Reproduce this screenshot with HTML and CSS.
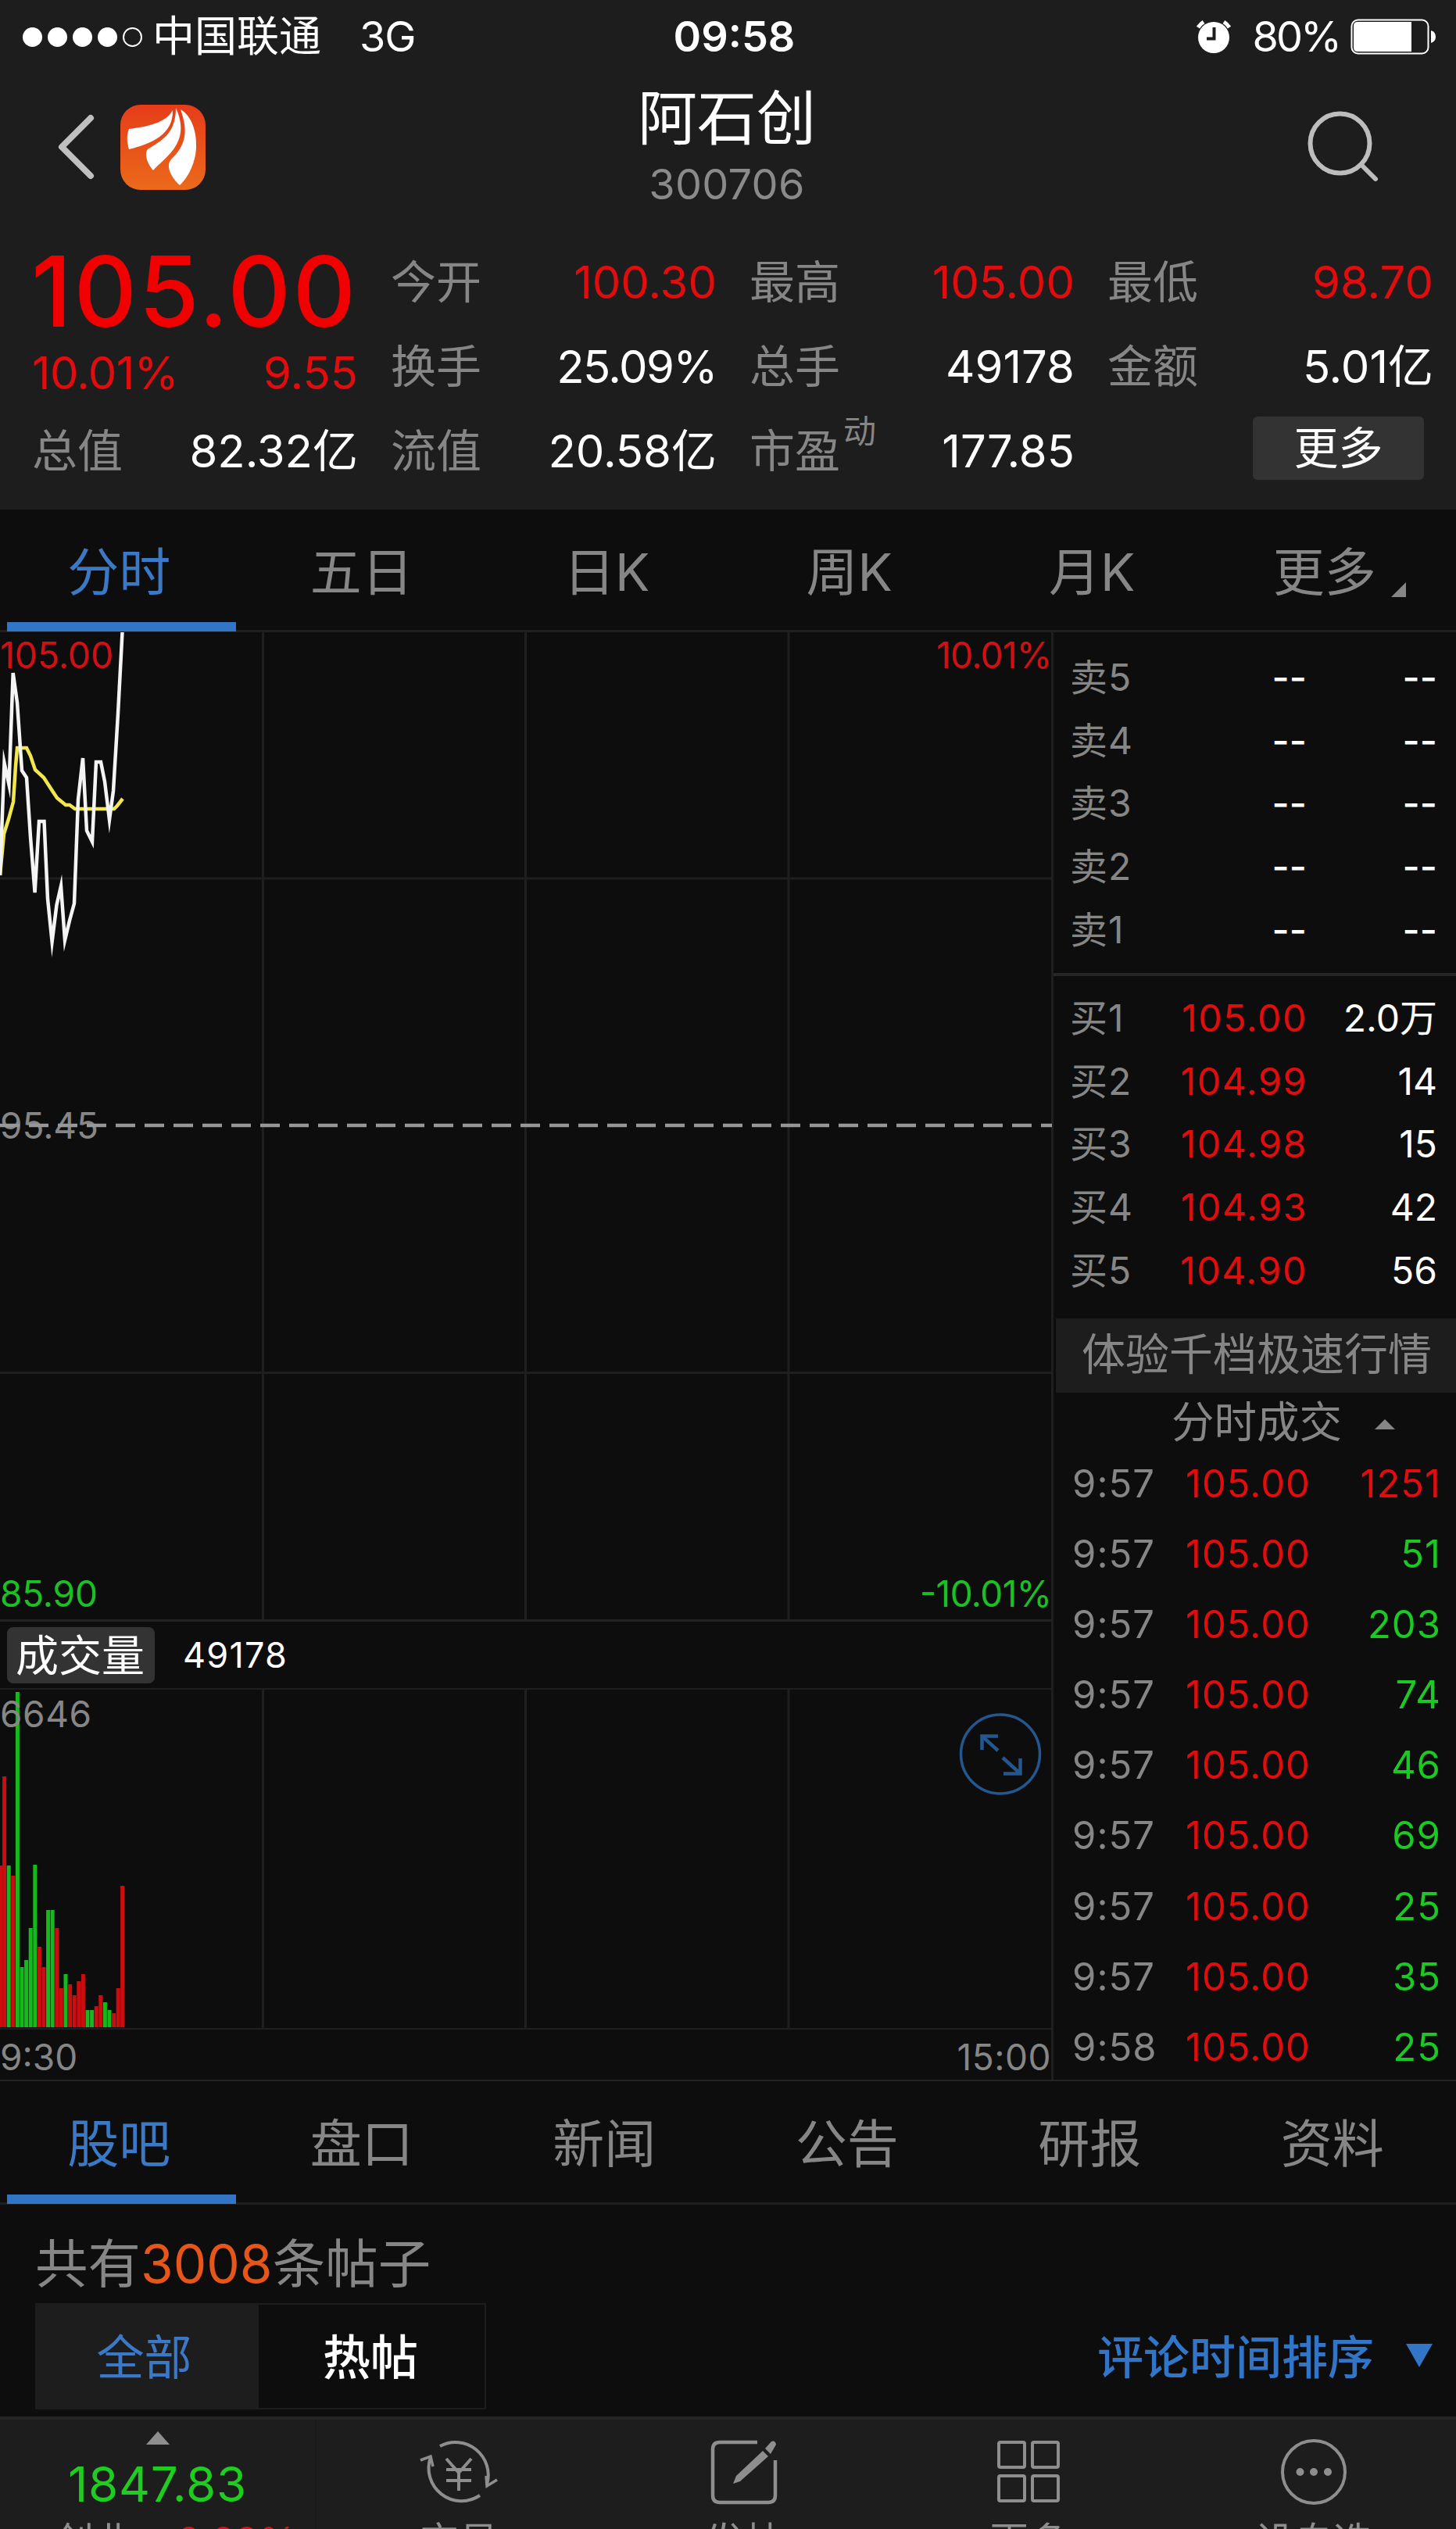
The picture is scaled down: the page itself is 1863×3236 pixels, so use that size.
FILE: index.html
```html
<!DOCTYPE html>
<html lang="zh-CN">
<head>
    <meta charset="UTF-8">
    <meta name="viewport" content="width=device-width, initial-scale=1.0">
    <title>阿石创 300706</title>
    <link rel="stylesheet" href="styles.css">
</head>
<body>
    <header class="header">
        <div class="status-bar">
            <div class="signal"><i></i><i></i><i></i><i></i><i class="empty"></i></div>
            <span class="carrier">中国联通</span>
            <span class="network">3G</span>
            <span class="clock">09:58</span>
            <svg class="alarm" width="44" height="44" viewBox="0 0 44 44">
                <circle cx="22" cy="23" r="20" fill="#fff"/>
                <path d="M2 10A26 26 0 0 1 9 3M35 3A26 26 0 0 1 42 10" stroke="#fff" stroke-width="5" fill="none"/>
                <path d="M22.500 10V24.500H13" stroke="#1d1d1d" stroke-width="4" fill="none"/>
            </svg>
            <span class="battery-text">80%</span>
            <svg class="battery" width="110" height="46" viewBox="0 0 110 46">
                <rect x="1.500" y="1.500" width="98" height="43" rx="8" fill="none" stroke="#fff" stroke-width="2"/>
                <path d="M9 4H78V42H9Q4 42 4 37V9Q4 4 9 4Z" fill="#fff"/>
                <path d="M103 15Q109 17 109 23T103 31Z" fill="#fff"/>
            </svg>
        </div>
        <div class="nav">
            <svg class="back" width="50" height="86" viewBox="0 0 50 86">
                <path d="M45 6L8 43L45 80" fill="none" stroke="#c0c0c0" stroke-width="8" stroke-linecap="round" stroke-linejoin="round"/>
            </svg>
            <svg class="logo" width="109" height="109" viewBox="0 0 109 109">
                <defs>
                    <linearGradient id="logoBg" x1="0" y1="0" x2="0" y2="1">
                        <stop offset="0" stop-color="#e63c19"/>
                        <stop offset="1" stop-color="#ea6a1b"/>
                    </linearGradient>
                </defs>
                <rect width="109" height="109" rx="26" fill="url(#logoBg)"/>
                <path d="M67 7C60 20 44 27 11 31C8 39 8 47 11 57C40 50 68 38 67 7Z" fill="#fff"/>
                <path d="M71 4C78 20 82 38 68 57C60 68 50 75 42 84C35 76 30 63 35 57C52 46 71 38 71 4Z" fill="#fff"/>
                <path d="M77 6C91 14 98 34 97 55C96 76 86 94 76 103C66 94 57 79 65 70C84 52 87 34 77 6Z" fill="#fff"/>
            </svg>
            <div class="title">
                <h1>阿石创</h1>
                <p>300706</p>
            </div>
            <svg class="search" width="92" height="92" viewBox="0 0 92 92">
                <circle cx="41.500" cy="41.500" r="38" fill="none" stroke="#bdbdbd" stroke-width="6"/>
                <path d="M69 69L87 87" stroke="#bdbdbd" stroke-width="6" stroke-linecap="round"/>
            </svg>
        </div>
        <div class="quote">
            <div class="quote-col main">
                <div class="price">105.00</div>
                <div class="row change"><span>10.01%</span><span>9.55</span></div>
                <div class="row"><label>总值</label><b>82.32亿</b></div>
            </div>
            <div class="quote-col">
                <div class="row"><label>今开</label><b class="up">100.30</b></div>
                <div class="row"><label>换手</label><b class="percent">25.09%</b></div>
                <div class="row"><label>流值</label><b>20.58亿</b></div>
            </div>
            <div class="quote-col">
                <div class="row"><label>最高</label><b class="up">105.00</b></div>
                <div class="row"><label>总手</label><b>49178</b></div>
                <div class="row"><label>市盈<sup>动</sup></label><b>177.85</b></div>
            </div>
            <div class="quote-col">
                <div class="row"><label>最低</label><b class="up">98.70</b></div>
                <div class="row"><label>金额</label><b>5.01亿</b></div>
                <div class="row"><button class="more">更多</button></div>
            </div>
        </div>
    </header>

    <nav class="tabs">
        <a class="active">分时</a>
        <a>五日</a>
        <a>日K</a>
        <a>周K</a>
        <a>月K</a>
        <a class="tab-more">更多<i></i></a>
    </nav>

    <main class="market">
        <section class="charts">
            <!-- 分时走势 -->
            <svg class="price-chart" width="1346" height="1263" viewBox="0 0 1346 1263">
                <path class="grid" d="M336.500 0V1263M672.500 0V1263M1009 0V1263M0 315H1346M0 947.500H1346"/>
                <text class="up" x="0" y="46" textLength="145">105.00</text>
                <text class="up" x="1346" y="46" text-anchor="end" textLength="148">10.01%</text>
                <text class="muted" x="0" y="648" textLength="126">95.45</text>
                <text class="down" x="0" y="1247" textLength="125">85.90</text>
                <text class="down" x="1346" y="1247" text-anchor="end" textLength="169">-10.01%</text>
                <path class="close-line" d="M0 631H1346"/>
                <polyline class="avg-line" points="0,311 5,258 11,239 17,217 20,171 22,148 34,148 39,158 45,176 56,186 67,203 73,212 84,221 89,221 96,226 146,226 150,222 157,213"/>
                <polyline class="price-line" points="0,311 5.500,167 11.500,195 16.700,52 22,90 28,177 34,186 39,262 44.600,333 50,242 56.500,242 61,341 66.600,396 72.500,349 78,325 83,394 89,369 95,347 100,214 106,161 111,254 118,268 123,166 129,166 134,191 140,240 145,203 151,104 156.500,0"/>
            </svg>
            <div class="volume-head">
                <span class="chip">成交量</span>
                <span class="volume-total">49178</span>
            </div>
            <!-- 成交量 -->
            <svg class="volume-chart" width="1346" height="437" viewBox="0 0 1346 437">
                <path class="grid" d="M336.500 0V437M672.500 0V437M1009 0V437M0 .5H1346M0 436.500H1346"/>
                <path class="bar-up" d="M.5 434V227M5.600 434V113M16.800 434V240M50.400 434V331M56 434V357M72.800 434V307M78.400 434V384M89.600 434V379M95.200 434V393M100.800 434V375M106.400 434V366M123.200 434V407M128.800 434V393M145.600 434V416M151.200 434V384M156.600 434V253"/>
                <path class="bar-down" d="M11.200 434V227M22.400 434V5M28 434V357M33.600 434V348M39.200 434V307M44.800 434V226M61.600 434V284M67.200 434V284M84 434V366M112 434V412M117.600 434V412M134.400 434V402M140 434V412"/>
                <text class="muted" x="0" y="50" textLength="117">6646</text>
                <g fill="none" stroke="#24578f" stroke-width="3.500">
                    <circle cx="1280" cy="84.500" r="50.500"/>
                    <path d="M1277 80L1256 61M1256.500 79V61.500H1277M1283 89L1305 109M1305.500 90V109.500H1284" stroke-width="4.500"/>
                </g>
            </svg>
            <div class="time-axis"><span>9:30</span><span>15:00</span></div>
        </section>

        <aside class="book">
            <div class="sells">
                <div class="level"><label>卖5</label><span>--</span><span>--</span></div>
                <div class="level"><label>卖4</label><span>--</span><span>--</span></div>
                <div class="level"><label>卖3</label><span>--</span><span>--</span></div>
                <div class="level"><label>卖2</label><span>--</span><span>--</span></div>
                <div class="level"><label>卖1</label><span>--</span><span>--</span></div>
            </div>
            <div class="buys">
                <div class="level"><label>买1</label><span class="up">105.00</span><span>2.0万</span></div>
                <div class="level"><label>买2</label><span class="up">104.99</span><span>14</span></div>
                <div class="level"><label>买3</label><span class="up">104.98</span><span>15</span></div>
                <div class="level"><label>买4</label><span class="up">104.93</span><span>42</span></div>
                <div class="level"><label>买5</label><span class="up">104.90</span><span>56</span></div>
            </div>
            <div class="banner">体验千档极速行情</div>
            <div class="trades-title">分时成交<i></i></div>
            <div class="trades">
                <div class="trade"><span>9:57</span><span class="up">105.00</span><span class="up">1251</span></div>
                <div class="trade"><span>9:57</span><span class="up">105.00</span><span class="down">51</span></div>
                <div class="trade"><span>9:57</span><span class="up">105.00</span><span class="down">203</span></div>
                <div class="trade"><span>9:57</span><span class="up">105.00</span><span class="down">74</span></div>
                <div class="trade"><span>9:57</span><span class="up">105.00</span><span class="down">46</span></div>
                <div class="trade"><span>9:57</span><span class="up">105.00</span><span class="down">69</span></div>
                <div class="trade"><span>9:57</span><span class="up">105.00</span><span class="down">25</span></div>
                <div class="trade"><span>9:57</span><span class="up">105.00</span><span class="down">35</span></div>
                <div class="trade"><span>9:58</span><span class="up">105.00</span><span class="down">25</span></div>
            </div>
        </aside>
    </main>

    <nav class="tabs info-tabs">
        <a class="active">股吧</a>
        <a>盘口</a>
        <a>新闻</a>
        <a>公告</a>
        <a>研报</a>
        <a>资料</a>
    </nav>

    <section class="posts">
        <p class="post-count">共有<em>3008</em>条帖子</p>
        <div class="post-filter">
            <div class="segment">
                <button class="selected">全部</button>
                <button>热帖</button>
            </div>
            <div class="sort">评论时间排序<i></i></div>
        </div>
    </section>

    <footer class="toolbar">
        <div class="index">
            <i></i>
            <strong>1847.83</strong>
            <p><span>创业</span><span class="up">-0.62%</span></p>
        </div>
        <div class="tool">
            <svg width="100" height="90" viewBox="0 0 100 90" fill="none" stroke="#8e8e8e" stroke-width="4">
                <path d="M26 11A42 42 0 0 1 86 60M77 74A42 42 0 0 1 14 25"/>
                <path d="M1 29L14 24L17 37M99 54L86 62L85 49" stroke-width="3.500"/>
                <path d="M34 27L50 45L66 27M34 41H66M34 55H66M50 43V68"/>
            </svg>
            <p>交易</p>
        </div>
        <div class="tool">
            <svg width="100" height="90" viewBox="0 0 100 90">
                <path d="M67 6H19Q10 6 10 15V74Q10 83 19 83H81Q90 83 90 74V29" fill="none" stroke="#8e8e8e" stroke-width="4.500"/>
                <path d="M74 17L81 24L45 56L36 59L40 49ZM77 14L85 5Q90 3 91 9L84 21Z" fill="#8e8e8e"/>
            </svg>
            <p>发帖</p>
        </div>
        <div class="tool">
            <svg width="100" height="90" viewBox="0 0 100 90" fill="none" stroke="#8e8e8e" stroke-width="4">
                <rect x="12" y="6" width="33" height="32" rx="2"/>
                <rect x="55" y="6" width="33" height="32" rx="2"/>
                <rect x="12" y="49" width="33" height="32" rx="2"/>
                <rect x="55" y="49" width="33" height="32" rx="2"/>
            </svg>
            <p>更多</p>
        </div>
        <div class="tool">
            <svg width="100" height="90" viewBox="0 0 100 90">
                <circle cx="50" cy="44" r="40" fill="none" stroke="#8e8e8e" stroke-width="4"/>
                <path d="M27.500 44a5 5 0 1 0 10 0a5 5 0 1 0-10 0M45 44a5 5 0 1 0 10 0a5 5 0 1 0-10 0M63 44a5 5 0 1 0 10 0a5 5 0 1 0-10 0" fill="#8e8e8e"/>
            </svg>
            <p>设自选</p>
        </div>
    </footer>
</body>
</html>
```
FILE: styles.css
```css
* {
    box-sizing: border-box;
}

body {
    width: 1863px;
    height: 3236px;
    margin: 0;
    overflow: hidden;
    background: #0d0d0d;
    color: #fff;
    font-family: Inter, "Noto Sans CJK SC", sans-serif;
}

h1, p {
    margin: 0;
    font-weight: 400;
}

button {
    padding: 0;
    border: 0;
    background: none;
    color: inherit;
    font-family: inherit;
}

i, em, b {
    font-style: normal;
    font-weight: 400;
}

.up {
    color: #e00c0e;
    fill: #d01015;
}

.down {
    color: #1cc824;
    fill: #1cc024;
}

.muted {
    fill: #868686;
}

/* header */
.header {
    height: 652px;
    background: #1d1d1d;
}

.status-bar {
    position: relative;
    display: flex;
    align-items: center;
    height: 94px;
    padding: 0 25px 0 29px;
    font-size: 54px;
    line-height: 94px;
}

.signal {
    display: flex;
    gap: 7px;
    margin-right: 13px;
}

.signal i {
    width: 25px;
    height: 25px;
    border-radius: 50%;
    background: #fff;
}

.signal .empty {
    border: 2px solid #fff;
    background: none;
}

.network {
    margin-left: 49px;
    letter-spacing: -1px;
}

.clock {
    position: absolute;
    left: 0;
    right: 0;
    padding-left: 16px;
    text-align: center;
    font-weight: 600;
}

.alarm {
    margin-left: auto;
    margin-right: 28px;
}

.battery-text {
    margin-right: 14px;
    letter-spacing: -3px;
}

.nav {
    position: relative;
    display: flex;
    align-items: center;
    height: 188px;
    padding: 0 98px 0 71px;
}

.logo {
    margin-left: 33px;
}

.title {
    flex: 1;
    padding: 8px 0 0 24px;
    text-align: center;
}

.title h1 {
    font-size: 76px;
    line-height: 88px;
}

.title p {
    color: #8a8a8a;
    font-size: 54px;
    letter-spacing: .3px;
    line-height: 82px;
}

.search {
    margin-left: 100px;
}

/* quote */
.quote {
    display: grid;
    grid-template-columns: 417px 417px 416px 417px;
    column-gap: 42px;
    padding: 25px 28px 0 41px;
}

.quote-col .row {
    display: flex;
    align-items: center;
    justify-content: space-between;
    height: 108px;
    font-size: 58px;
    line-height: 108px;
}

.quote label {
    color: #868686;
    font-size: 58px;
}

.quote sup {
    position: absolute;
    margin: -25px 0 0 4px;
    font-size: 42px;
    line-height: 108px;
}

.quote .percent {
    letter-spacing: -1.500px;
}

.price {
    height: 132px;
    margin-left: -1px;
    color: #f00000;
    font-size: 125px;
    font-weight: 500;
    letter-spacing: 2.500px;
    line-height: 132px;
    white-space: nowrap;
}

.quote-col .change {
    height: 76px;
    margin-bottom: 8px;
    color: #e00c0e;
    line-height: 76px;
}

.change span:first-child {
    letter-spacing: -.7px;
}

.quote .more {
    width: 219px;
    height: 81px;
    margin: 0 12px 7px auto;
    border-radius: 6px;
    background: #333;
    font-size: 57px;
    line-height: 81px;
}

/* tabs */
.tabs {
    display: grid;
    grid-template-rows: 100%;
    grid-template-columns: repeat(6, 1fr);
    height: 157px;
    border-bottom: 3px solid #1f1f1f;
    color: #868686;
    font-size: 66px;
    line-height: 161px;
    text-align: center;
}

.tabs a {
    position: relative;
    padding-right: 6px;
}

.tabs a:nth-child(3), .tabs a:nth-child(4), .tabs a:nth-child(5) {
    padding-right: 0;
}

.info-tabs {
    height: 158px;
}

.info-tabs a:nth-child(n) {
    padding-right: 6px;
}

.tabs .active {
    color: #3b78c6;
}

.tabs .active::after {
    content: "";
    position: absolute;
    left: 9px;
    right: 9px;
    bottom: -2px;
    height: 12px;
    background: #3275c6;
}

.tabs .tab-more {
    padding-right: 26px;
}

.tab-more i {
    position: absolute;
    right: 64px;
    bottom: 42px;
    border-left: 19px solid transparent;
    border-bottom: 19px solid #868686;
}

/* charts */
.market {
    display: grid;
    grid-template-columns: 1348px 515px;
    height: 1854px;
    border-bottom: 2px solid #242424;
}

.charts {
    height: 1852px;
    border-right: 3px solid #1f1f1f;
}

.charts svg {
    display: block;
}

.charts text {
    font-size: 46px;
}

.grid {
    fill: none;
    stroke: #1f1f1f;
    stroke-width: 3;
}

.close-line {
    fill: none;
    stroke: #979797;
    stroke-width: 4.500;
    stroke-dasharray: 25 12;
}

.avg-line, .price-line {
    fill: none;
    stroke: #f4f4f4;
    stroke-width: 4.500;
    stroke-miterlimit: 10;
}

.avg-line {
    stroke: #f3e750;
}

.bar-up, .bar-down {
    fill: none;
    stroke: #cc0d10;
    stroke-width: 5;
}

.bar-down {
    stroke: #16b91c;
}

.volume-head {
    display: flex;
    align-items: center;
    gap: 36px;
    height: 88px;
    padding-left: 9px;
    border-top: 3px solid #222;
}

.chip {
    width: 189px;
    height: 72px;
    padding-right: 2px;
    border-radius: 8px;
    background: #333;
    font-size: 55px;
    line-height: 72px;
    text-align: center;
}

.volume-total {
    font-size: 45px;
    letter-spacing: 1.200px;
}

.time-axis {
    display: flex;
    justify-content: space-between;
    color: #868686;
    font-size: 46px;
    line-height: 71px;
}

.time-axis span:last-child {
    letter-spacing: .5px;
}

/* order book */
.level, .trade {
    display: grid;
    grid-template-columns: 102px 202px 1fr;
    height: 80.700px;
    padding: 0 24px 0 21px;
    font-size: 48px;
    line-height: 80.700px;
    text-align: right;
}

.level label {
    color: #868686;
    letter-spacing: 1px;
    text-align: left;
}

.level .up {
    letter-spacing: 1.700px;
}

.sells {
    height: 440px;
    padding-top: 18px;
    border-bottom: 4px solid #262626;
}

.sells span {
    font-weight: 500;
}

.sells span:nth-child(2) {
    padding-right: 1px;
}

.buys {
    height: 438px;
    padding-top: 14px;
}

.banner {
    height: 95px;
    margin-left: 3px;
    padding-left: 2px;
    background: #1d1d1d;
    color: #868686;
    font-size: 56px;
    line-height: 92px;
    text-align: center;
}

.trades-title {
    display: flex;
    align-items: center;
    height: 72px;
    padding: 3px 0 0 151px;
    color: #868686;
    font-size: 54.500px;
    line-height: 69px;
}

.trades-title i {
    margin: 6px 0 0 42px;
    border: 13px solid transparent;
    border-top: 0;
    border-bottom-color: #868686;
}

.trade {
    height: 90.100px;
    grid-template-columns: 102px 203px 1fr;
    padding: 0 19px 0 24px;
    font-size: 49px;
    letter-spacing: 1px;
    line-height: 90.100px;
}

.trade span:first-child {
    color: #868686;
    text-align: left;
}

/* posts */
.posts {
    height: 271px;
    padding: 30px 30px 0 45px;
}

.post-count {
    color: #868686;
    font-size: 67.500px;
    line-height: 92px;
}

.post-count em {
    color: #e6561a;
}

.post-filter {
    display: flex;
    align-items: center;
    justify-content: space-between;
    margin-top: 4px;
}

.segment {
    display: grid;
    grid-template-columns: 284px 1fr;
    width: 577px;
    height: 136px;
    border: 2px solid #1d1d1d;
}

.segment button {
    padding: 0 3px 5px 0;
    font-size: 61px;
    font-weight: 500;
}

.segment .selected {
    padding-right: 9px;
    background: #1d1d1d;
    color: #3b78c6;
    font-weight: 400;
}

.sort {
    display: flex;
    align-items: center;
    padding-bottom: 5px;
    color: #3275c6;
    font-size: 59px;
    font-weight: 500;
}

.sort i {
    margin: 3px 0 0 41px;
    border: 17px solid transparent;
    border-top: 30px solid #3275c6;
    border-bottom: 0;
}

/* toolbar */
.toolbar {
    display: grid;
    grid-template-columns: 405px repeat(4, 1fr);
    height: 144px;
    overflow: hidden;
    border-top: 4px solid #262626;
    background: #1d1d1d;
    color: #8e8e8e;
    text-align: center;
}

.index {
    padding-top: 15px;
    border-right: 2px solid #191919;
}

.index i {
    display: block;
    width: 0;
    margin: 0 auto;
    border: 15px solid transparent;
    border-top: 0;
    border-bottom: 17px solid #8e8e8e;
}

.index strong {
    display: block;
    color: #1fcc20;
    font-size: 62px;
    font-weight: 400;
    letter-spacing: .7px;
    line-height: 102px;
}

.index p, .tool p {
    font-size: 50px;
    line-height: 50px;
}

.index p {
    display: flex;
    justify-content: space-between;
    margin-top: -3px;
    padding: 0 23px 0 70px;
}

.tool {
    padding-top: 23px;
}

.tool svg {
    display: block;
    margin: 0 auto 18px;
}
```
